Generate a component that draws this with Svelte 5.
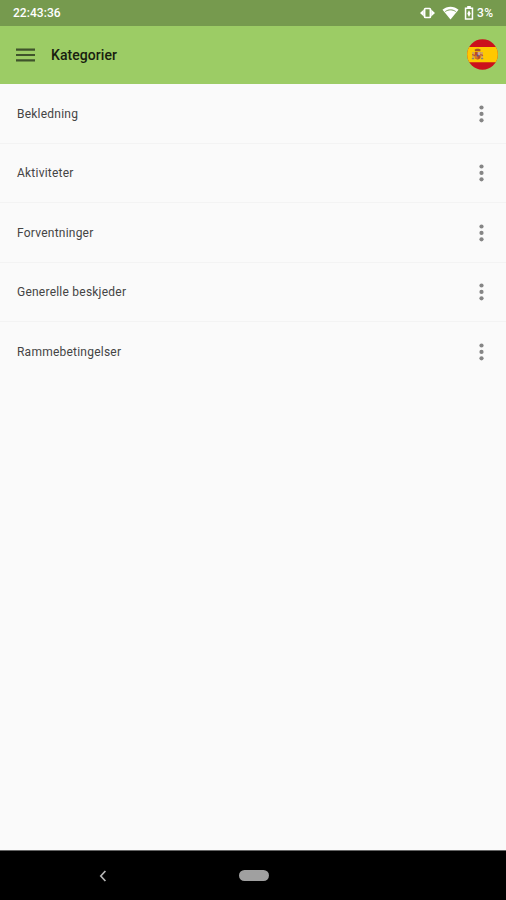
<script>
  const categories = [
    'Bekledning',
    'Aktiviteter',
    'Forventninger',
    'Generelle beskjeder',
    'Rammebetingelser',
  ];
</script>

<div class="screen">
  <div class="status">
    <span class="clock">22:43:36</span>
    <div class="indicators">
      <svg class="vibrate" width="15" height="12" viewBox="0 0 15 12">
        <rect x="4.600" y="1.500" width="5.800" height="9" rx="0.800" fill="none" stroke="#fff" stroke-width="1.700" />
        <path d="M3.800 2.500v7L0 6zM11.200 2.500v7L15 6z" fill="#fff" />
      </svg>
      <svg class="wifi" width="17" height="14" viewBox="0 0 17 14">
        <path d="M.5 3.800C5 -.2 12 -.2 16.500 3.800L8.500 13.500z" fill="#fff" />
        <path d="M3.300 5.500C6.500 3.300 10.500 3.300 13.700 5.500" fill="none" stroke="#769a4e" stroke-width="1" />
      </svg>
      <svg class="battery" width="10" height="14" viewBox="0 0 10 14">
        <path d="M3.200 0h3.600v1.500H9.200V13.800H.8V1.500h2.400z" fill="#fff" />
        <path d="M2.300 3h5.400v9.300H2.300z" fill="#769a4e" />
        <path d="M5 4.300L3.300 7.500 5 11 6.700 7.500z" fill="#fff" />
      </svg>
      <span class="percent">3%</span>
    </div>
  </div>

  <header>
    <button class="menu" aria-label="Meny">
      <svg width="19" height="14" viewBox="0 0 19 14">
        <path d="M0 1.700h19M0 7h19M0 12.300h19" stroke="#3f532b" stroke-width="2.200" />
      </svg>
    </button>
    <h1>Kategorier</h1>
    <svg class="flag" width="31" height="31" viewBox="0 0 32 32">
      <defs><clipPath id="disc"><circle cx="16" cy="16" r="15.800" /></clipPath></defs>
      <g clip-path="url(#disc)">
        <path d="M0 0h32v32H0z" fill="#cb101c" />
        <path d="M0 8.300h32v15.700H0z" fill="#ffc800" />
        <path d="M5.500 13.500h1.600v7H5.500zM14.700 13.500h1.600v7h-1.600z" fill="#c9a06a" />
        <path d="M5 19.700h2.500v1.300H5zM14.300 19.700h2.500v1.300h-2.500z" fill="#8b8172" />
        <path d="M8 13.500h6v5.200c0 3.200-6 3.200-6 0z" fill="#b84a2c" />
        <path d="M11 13.500h3v3.200h-3z" fill="#c9a6a0" />
        <path d="M8 17h3v3.500c-1.700 0-3-.6-3-1.800z" fill="#d8782b" />
        <path d="M8.300 12.700L7.900 11c1.200-1.300 5-1.300 6.200 0l-.4 1.700z" fill="#a8542a" />
        <path d="M5.300 16.200l3 .7M13.800 16.200l2.800.7" stroke="#b23a2a" stroke-width="1" />
        <circle cx="11" cy="17" r="1" fill="#4c5a92" />
      </g>
    </svg>
  </header>

  <main>
    {#each categories as name}
      <div class="row">
        <span>{name}</span>
        <svg class="more" width="5" height="18" viewBox="0 0 5 18">
          <circle cx="2.500" cy="2.500" r="2.100" />
          <circle cx="2.500" cy="8.900" r="2.100" />
          <circle cx="2.500" cy="15.300" r="2.100" />
        </svg>
      </div>
    {/each}
  </main>

  <nav>
    <svg class="back" width="8" height="12" viewBox="0 0 8 12">
      <path d="M6.400 1L1.800 6l4.600 5" fill="none" stroke="#b4b4b4" stroke-width="1.700" />
    </svg>
    <div class="home"></div>
  </nav>
</div>

<style>
  :global(body) {
    margin: 0;
  }
  .screen {
    width: 506px;
    height: 900px;
    display: flex;
    flex-direction: column;
    background: #fafafa;
    font-family: Roboto, sans-serif;
    overflow: hidden;
  }
  .status {
    height: 26px;
    flex: none;
    box-sizing: border-box;
    padding: 0 12px 0 13px;
    display: flex;
    justify-content: space-between;
    align-items: center;
    background: #769a4e;
    color: #fff;
    font-size: 12px;
    font-weight: 500;
  }
  .clock {
    letter-spacing: 0.05px;
  }
  .indicators {
    display: flex;
    align-items: center;
  }
  .wifi {
    margin-left: 7px;
  }
  .battery {
    margin: 0 3px 0 5px;
  }
  .percent {
    width: 17px;
    white-space: nowrap;
    letter-spacing: 0.4px;
  }
  header {
    height: 57.500px;
    flex: none;
    box-sizing: border-box;
    padding: 0 8px 0 16px;
    display: flex;
    align-items: center;
    background: #9ccc65;
  }
  .menu {
    padding: 0;
    border: 0;
    background: none;
    display: flex;
  }
  h1 {
    flex: 1;
    margin: 0 0 0 16px;
    font-size: 14px;
    font-weight: 500;
    letter-spacing: 0.06px;
    color: #18200f;
  }
  main {
    flex: 1;
  }
  .row {
    height: 59.500px;
    box-sizing: border-box;
    padding: 1px 22px 0 17px;
    border-bottom: 1px solid #f3f3f3;
    display: flex;
    justify-content: space-between;
    align-items: center;
    font-size: 12px;
    letter-spacing: 0.23px;
    color: #444;
  }
  .row:first-child {
    height: 60px;
  }
  .row:last-child {
    border-bottom-color: transparent;
  }
  .more {
    fill: #858585;
  }
  nav {
    height: 50px;
    flex: none;
    box-sizing: border-box;
    padding-left: 99px;
    border-top: 1px solid #666;
    display: flex;
    align-items: center;
    background: #000;
  }
  .home {
    width: 30px;
    height: 11px;
    margin-left: 132px;
    border-radius: 6px;
    background: #a0a0a0;
  }
</style>
